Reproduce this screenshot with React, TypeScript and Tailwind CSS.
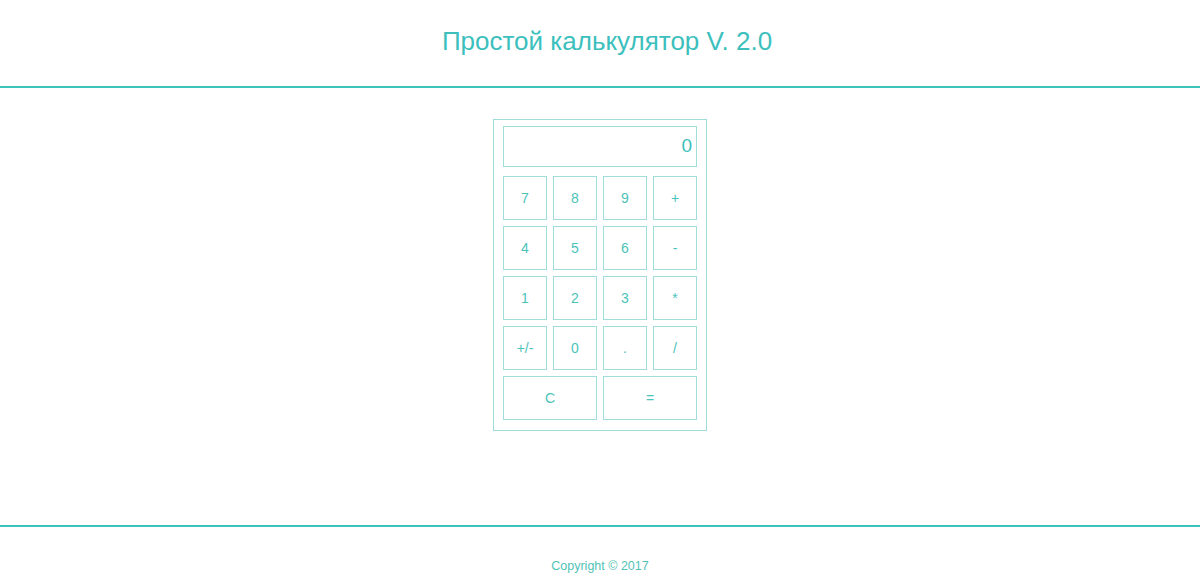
const keys = ["7", "8", "9", "+", "4", "5", "6", "-", "1", "2", "3", "*", "+/-", "0", ".", "/"];

const App = () => {
  return (
    <div className="flex min-h-[582px] flex-col bg-white font-['Liberation_Sans',Arial,sans-serif] text-[#3cbfbd]">
      <header className="flex h-[88px] items-start justify-center border-b-2 border-[#3cc4bb] pt-[25px] pl-[14px]">
        <h1 className="text-[26px] leading-[32px]">Простой калькулятор V. 2.0</h1>
      </header>

      <main className="flex h-[437px] justify-center pt-[31px]">
        <div className="h-[312px] w-[214px] border border-[#9fded8] px-[9px] pt-[6px]">
          <div className="flex h-[41px] items-center justify-end border border-[#9fded8] pr-[4px] text-[19px]">
            0
          </div>
          <div className="mt-[9px] grid grid-cols-4 gap-[6px]">
            {keys.map((k) => (
              <button
                key={k}
                className="flex h-[44px] items-center justify-center border border-[#9fded8] text-[14px] text-[#4cc3b9]"
              >
                {k}
              </button>
            ))}
            <button className="col-span-2 flex h-[44px] items-center justify-center border border-[#9fded8] text-[14px] text-[#4cc3b9]">
              C
            </button>
            <button className="col-span-2 flex h-[44px] items-center justify-center border border-[#9fded8] text-[14px] text-[#4cc3b9]">
              =
            </button>
          </div>
        </div>
      </main>

      <footer className="flex h-[57px] items-start justify-center border-t-2 border-[#3cc4bb] pt-[32px]">
        <p className="text-[12.5px] leading-[14px] text-[#52c2b6]">Copyright © 2017</p>
      </footer>
    </div>
  );
};

export default App;
